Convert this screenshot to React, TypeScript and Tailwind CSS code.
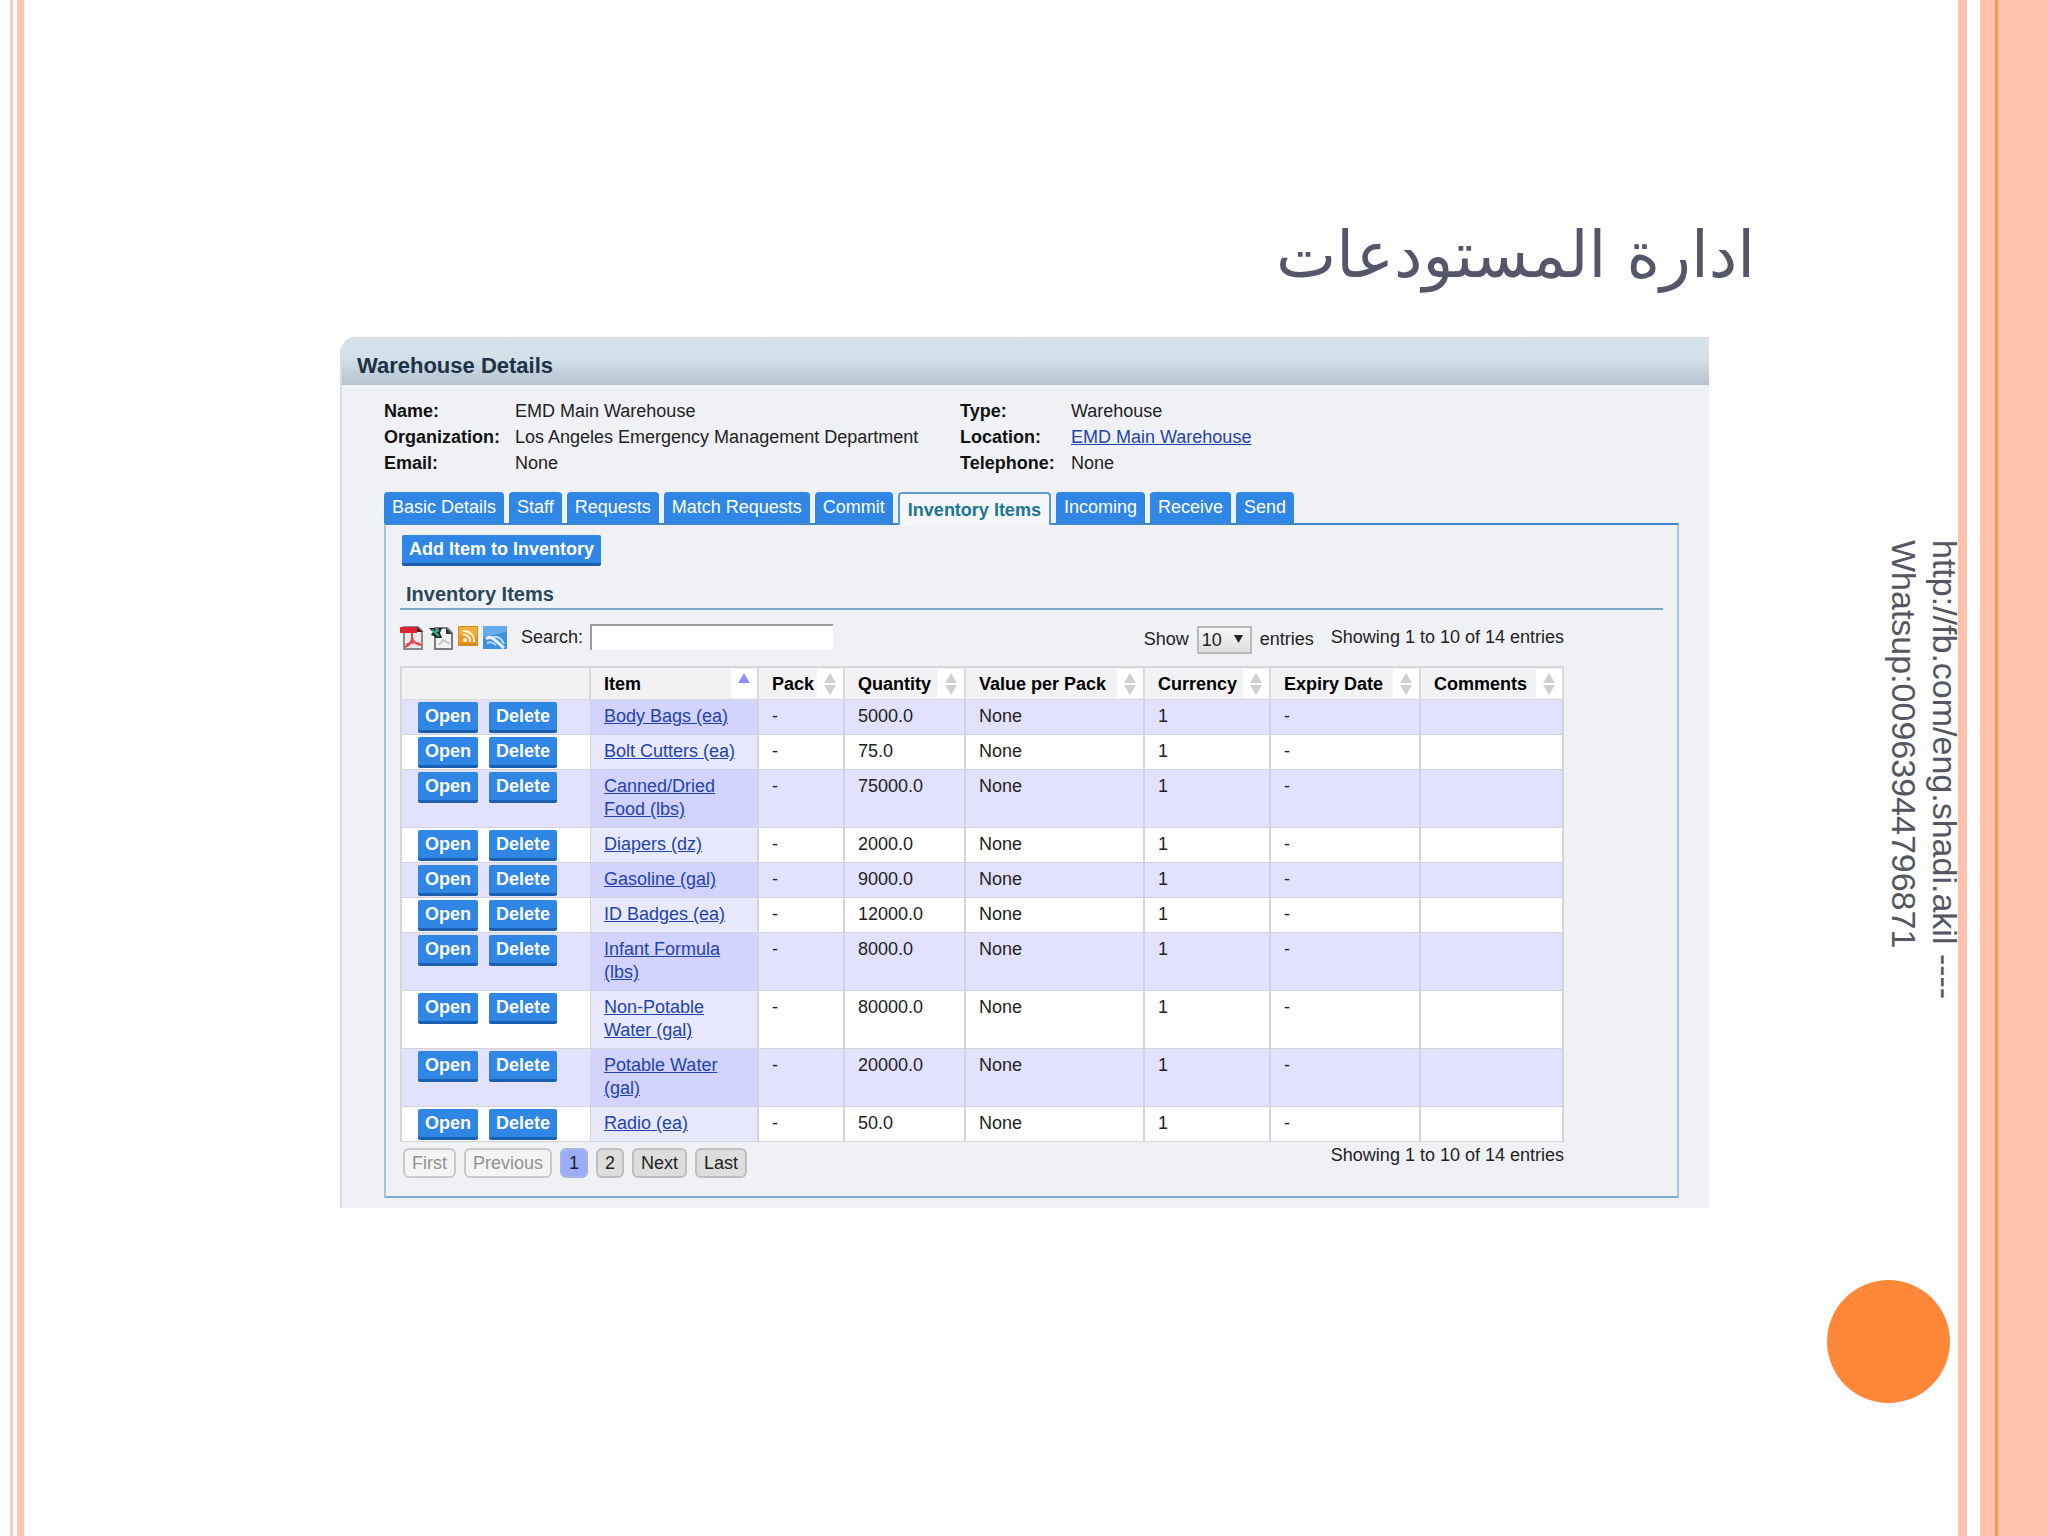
import React from "react";

type Tab = { label: string; active?: boolean };

const tabs: Tab[] = [
  { label: "Basic Details" },
  { label: "Staff" },
  { label: "Requests" },
  { label: "Match Requests" },
  { label: "Commit" },
  { label: "Inventory Items", active: true },
  { label: "Incoming" },
  { label: "Receive" },
  { label: "Send" },
];

const columns = [
  { label: "Item", width: "w-[168px]" },
  { label: "Pack", width: "w-[86px]" },
  { label: "Quantity", width: "w-[121px]" },
  { label: "Value per Pack", width: "w-[179px]" },
  { label: "Currency", width: "w-[126px]" },
  { label: "Expiry Date", width: "w-[150px]" },
  { label: "Comments", width: "w-[143px]" },
];

const rows = [
  { item: "Body Bags (ea)", quantity: "5000.0" },
  { item: "Bolt Cutters (ea)", quantity: "75.0" },
  { item: "Canned/Dried Food (lbs)", quantity: "75000.0" },
  { item: "Diapers (dz)", quantity: "2000.0" },
  { item: "Gasoline (gal)", quantity: "9000.0" },
  { item: "ID Badges (ea)", quantity: "12000.0" },
  { item: "Infant Formula (lbs)", quantity: "8000.0" },
  { item: "Non-Potable Water (gal)", quantity: "80000.0" },
  { item: "Potable Water (gal)", quantity: "20000.0" },
  { item: "Radio (ea)", quantity: "50.0" },
];

function SortIcon({ active }: { active: boolean }) {
  return (
    <span className="flex h-[29px] w-[26px] shrink-0 justify-center bg-white">
      {active ? (
        <svg className="mt-[4px] h-[10px] w-[12px]" viewBox="0 0 12 10" aria-hidden="true">
          <path d="M6 0L12 10H0z" fill="#8f90f5" />
        </svg>
      ) : (
        <svg className="mt-[4px] h-[22px] w-[14px]" viewBox="0 0 14 22" aria-hidden="true">
          <path d="M7 0L13 10H1zM7 22L13 12H1z" fill="#d0d0d0" />
        </svg>
      )}
    </span>
  );
}

function PdfIcon() {
  return (
    <svg className="size-6" viewBox="0 0 24 24" aria-hidden="true">
      <path d="M4 1h14l4 4v18H4z" fill="#e9e7e7" stroke="#8d8888" strokeWidth="2" />
      <path d="M17 1v5h6z" fill="#4a1a1a" />
      <path d="M0 1h17v6H0z" fill="#dd2431" />
      <path d="M12 7v6c-1 4-4 7-7 8M12 12c1 4 4 6 9 7M6 19c4-3 9-3 14-1" fill="none" stroke="#e0444c" strokeWidth="2" />
    </svg>
  );
}

function SpreadsheetIcon() {
  return (
    <svg className="size-6" viewBox="0 0 24 24" aria-hidden="true">
      <path d="M6 2h12l5 5v16H6z" fill="#f3f3f3" stroke="#7c7c7c" strokeWidth="2" />
      <path d="M17 2v6h6z" fill="#333" />
      <path d="M10 19l4-5 7 4" fill="none" stroke="#c4c4c4" strokeWidth="2" />
      <path d="M0 2h5l2 2 3-2h3l-2 5 2 5H7L5 10 2 9l2-3z" fill="#0d2a25" />
      <path d="M3 4l7 6M10 4L6 6" stroke="#3fb894" strokeWidth="2" />
    </svg>
  );
}

function FeedIcon() {
  return (
    <svg className="size-5" viewBox="0 0 20 20" aria-hidden="true">
      <rect width="20" height="20" rx="1" fill="#d98a1e" />
      <rect x="1" y="1" width="18" height="8" fill="#f0b03a" />
      <rect x="1" y="9" width="18" height="8" fill="#e99a22" />
      <circle cx="7" cy="14" r="2" fill="#fff6e2" />
      <path d="M5 9a6 6 0 0 1 7 7M5 5a10 10 0 0 1 11 11" fill="none" stroke="#fff6e2" strokeWidth="2" />
    </svg>
  );
}

function MapIcon() {
  return (
    <svg className="size-6" viewBox="0 0 24 24" aria-hidden="true">
      <rect width="24" height="23" fill="#3f8fe0" />
      <path d="M0 0h24v6L0 11z" fill="#66aaf0" />
      <path d="M3 13c3-3 7-1 10 2l8 7" fill="none" stroke="#e4f1fd" strokeWidth="3" />
      <path d="M10 11c5-1 9 2 11 7M4 17c4-2 6 0 9 2" fill="none" stroke="#b9dafa" strokeWidth="2" />
    </svg>
  );
}

const actionButton =
  "h-[31px] rounded-[2px] border-b-[3px] border-[#1b5fae] bg-[#2f86e4] px-[7px] text-[18px] leading-[27px] font-bold text-white";

export default function App() {
  return (
    <div className="flex min-h-screen bg-[#fefefe] font-['Liberation_Sans',Arial,sans-serif] text-[18px] leading-[26px] text-[#222]">
      <div className="flex shrink-0 pl-[10px]" aria-hidden="true">
        <div className="mr-1 w-[3px] bg-[#fbcdc0]" />
        <div className="w-[7px] bg-[#fdc4b0]" />
      </div>

      <main className="min-w-0 flex-1 pl-[316px]">
        <h1
          dir="rtl"
          lang="ar"
          className="-mr-[46px] h-[337px] pt-[200px] text-start font-['DejaVu_Sans',sans-serif] text-[64px] leading-[110px] text-[#55566a]"
        >
          ادارة المستودعات
        </h1>

        <section className="rounded-tl-[16px] border-l-2 border-[#dadde0] bg-[#f0f1f5] pb-[10px]">
          <h2 className="h-12 rounded-tl-[14px] border-t-2 border-[#d9dfe0] bg-linear-to-b from-[#d3e1ea] from-40% to-[#b5c3d0] pl-[15px] text-[22px] leading-[53px] font-bold text-[#1c3347]">
            Warehouse Details
          </h2>

          <dl className="grid grid-cols-[131px_445px_111px_1fr] pt-[13px] pl-[42px] [&>dt]:font-bold [&>dt]:text-[#111]">
            <dt>Name:</dt>
            <dd>EMD Main Warehouse</dd>
            <dt>Type:</dt>
            <dd>Warehouse</dd>
            <dt>Organization:</dt>
            <dd>Los Angeles Emergency Management Department</dd>
            <dt>Location:</dt>
            <dd>
              <a href="#warehouse" className="text-[#1f43ad] underline">
                EMD Main Warehouse
              </a>
            </dd>
            <dt>Email:</dt>
            <dd>None</dd>
            <dt>Telephone:</dt>
            <dd>None</dd>
          </dl>

          <div className="mr-[30px] ml-[42px]">
            <nav className="mt-4 flex h-[31px] gap-[5px]">
              {tabs.map((tab) =>
                tab.active ? (
                  <a
                    key={tab.label}
                    href="#inventory"
                    aria-current="page"
                    className="relative z-10 h-[33px] rounded-t-[4px] border-2 border-b-0 border-[#5c9bd8] bg-[#f4f6f9] px-2 leading-[32px] font-bold text-[#1d7591]"
                  >
                    {tab.label}
                  </a>
                ) : (
                  <a
                    key={tab.label}
                    href="#tab"
                    className="rounded-t-[4px] bg-[#2f86e4] px-2 leading-[31px] text-white"
                  >
                    {tab.label}
                  </a>
                ),
              )}
            </nav>

            <div className="border-2 border-[#a5c3e2] border-t-[#3d85cf] border-b-[#7fabd0] px-[14px] pt-[10px]">
              <button type="button" className={actionButton + " ml-[2px] block"}>
                Add Item to Inventory
              </button>

              <h3 className="mt-[15px] h-[29px] border-b-2 border-[#7ba7c2] pl-[6px] text-[20px] font-bold text-[#2a485c]">
                Inventory Items
              </h3>

              <div className="w-[1164px]">
                <div className="flex h-[56px] pt-[14px]">
                  <div className="flex gap-[5px] pt-[2px]">
                    <a href="#pdf" aria-label="Export as PDF"><PdfIcon /></a>
                    <a href="#xls" aria-label="Export as spreadsheet"><SpreadsheetIcon /></a>
                    <a href="#rss" aria-label="Subscribe to feed"><FeedIcon /></a>
                    <a href="#map" aria-label="Show on map"><MapIcon /></a>
                  </div>
                  <label htmlFor="search" className="ml-[14px]">
                    Search:
                  </label>
                  <input
                    id="search"
                    type="text"
                    className="ml-[7px] h-[26px] w-[243px] border-t-2 border-l-2 border-[#9b9b9b] bg-white px-2 outline-none"
                  />
                  <div className="ml-auto flex pt-[2px]">
                    <label htmlFor="length">Show</label>
                    <span className="relative ml-2 block">
                      <select
                        id="length"
                        defaultValue="10"
                        className="h-7 w-[55px] appearance-none border-2 border-[#b9b9b9] bg-linear-to-b from-[#f7f7f7] to-[#dedede] pl-[3px] leading-6"
                      >
                        <option>10</option>
                        <option>25</option>
                        <option>50</option>
                      </select>
                      <svg className="pointer-events-none absolute top-[8px] right-[9px] h-[9px] w-[9px]" viewBox="0 0 10 10" aria-hidden="true">
                        <path d="M0 1h10L5 10z" fill="#222" />
                      </svg>
                    </span>
                    <span className="ml-2">entries</span>
                  </div>
                  <span className="ml-[17px] block">Showing 1 to 10 of 14 entries</span>
                </div>

                <table className="w-full table-fixed border-separate border-spacing-0 border-t-2 border-l-2 border-[#d6d6db]">
                  <thead>
                    <tr className="bg-[#f2f2f5] text-left text-black [&>th]:border-r-2 [&>th]:border-b [&>th]:border-[#d9d9de]">
                      <th className="w-[189px]" aria-label="Actions" />
                      {columns.map((column) => (
                        <th key={column.label} className={column.width + " p-0 pl-[13px]"}>
                          <span className="flex h-[31px] items-center justify-between leading-[30px] whitespace-nowrap">
                            {column.label}
                            <SortIcon active={column.label === "Item"} />
                          </span>
                        </th>
                      ))}
                    </tr>
                  </thead>
                  <tbody>
                    {rows.map((row) => (
                      <tr
                        key={row.item}
                        className="group bg-white align-top leading-[23px] odd:bg-[#e2e2fe] [&>td]:border-r-2 [&>td]:border-b [&>td]:border-[#d3d3dc] [&>td]:pt-[5px] [&>td]:pb-[6px] [&>td]:pl-[13px]"
                      >
                        <td className="!border-r !p-0 !pt-[2px] !pl-[16px]">
                          <div className="flex h-[31px] gap-[11px]">
                            <button type="button" className={actionButton}>Open</button>
                            <button type="button" className={actionButton}>Delete</button>
                          </div>
                        </td>
                        <td className="bg-[#e9e9fe] pr-[13px] group-odd:bg-[#d3d3ff]">
                          <a href="#item" className="text-[#1f43ad] underline">{row.item}</a>
                        </td>
                        <td>-</td>
                        <td>{row.quantity}</td>
                        <td>None</td>
                        <td>1</td>
                        <td>-</td>
                        <td />
                      </tr>
                    ))}
                  </tbody>
                </table>

                <div className="flex h-[54px] items-start leading-[27px]">
                  <div className="mt-[6px] flex gap-2 pl-[3px] [&>button]:h-[30px] [&>button]:rounded-[6px] [&>button]:border-2 [&>button]:px-[7px]">
                    <button type="button" disabled className="border-[#c9c9c9] bg-[#f4f4f4] text-[#929292]">First</button>
                    <button type="button" disabled className="border-[#c9c9c9] bg-[#f4f4f4] text-[#929292]">Previous</button>
                    <button type="button" aria-current="page" className="border-[#a9b3df] bg-[#99adfb]">1</button>
                    <button type="button" className="border-[#bebebe] bg-[#dddddd]">2</button>
                    <button type="button" className="border-[#bebebe] bg-[#dddddd]">Next</button>
                    <button type="button" className="border-[#bebebe] bg-[#dddddd]">Last</button>
                  </div>
                  <span className="ml-auto">Showing 1 to 10 of 14 entries</span>
                </div>
              </div>
            </div>
          </div>
        </section>
      </main>

      <aside className="flex w-[249px] shrink-0 flex-col items-end justify-between pt-[540px] pb-[133px]">
        <p className="-mr-[7px] text-[34px] leading-[41px] whitespace-nowrap text-[#55565f] [writing-mode:vertical-rl]">
          http://fb.com/eng.shadi.akil ----
          <br />
          Whatsup:00963944796871
        </p>
        <div className="mr-2 size-[123px] rounded-full bg-[#ff8738]" />
      </aside>

      <div className="flex shrink-0" aria-hidden="true">
        <div className="mr-[13px] w-[9px] bg-[#ffc3ad]" />
        <div className="w-[15px] bg-[#ffc3ad]" />
        <div className="w-[3px] bg-[#ff9350]" />
        <div className="w-[50px] bg-[#ffc3ad]" />
      </div>
    </div>
  );
}
